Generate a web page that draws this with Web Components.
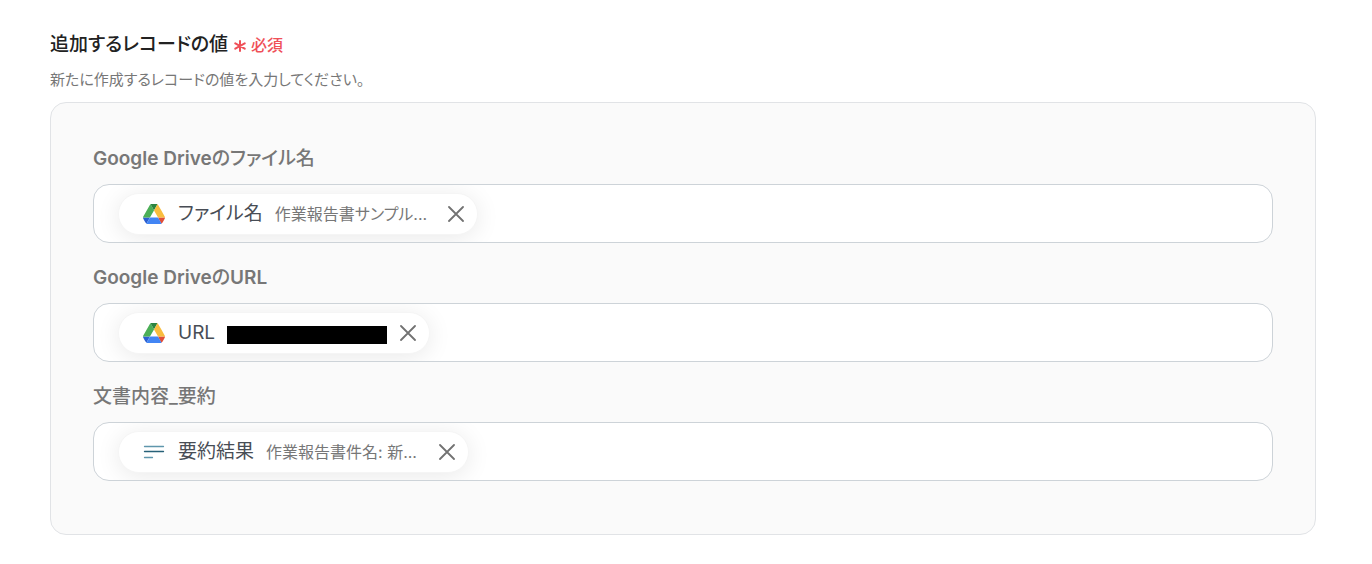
<!DOCTYPE html>
<html lang="ja">
<head>
<meta charset="utf-8">
<meta name="viewport" content="width=device-width, initial-scale=1">
<title>追加するレコードの値</title>
<style>
body {
  margin: 0;
  background: #fff;
  color: #222;
  font-family: Inter, "Noto Sans CJK JP", sans-serif;
  font-feature-settings: "palt";
}
b { font-weight: 600; }
</style>
</head>
<body>
<record-form>
  <span slot="title">追加するレコードの値</span>
  <span slot="help">新たに作成するレコードの値を入力してください。</span>
  <token-field>
    <span slot="label"><b>Google Drive</b>のファイル名</span>
    <value-token><drive-icon slot="icon"></drive-icon><span slot="name">ファイル名</span>作業報告書サンプル...</value-token>
  </token-field>
  <token-field>
    <span slot="label"><b>Google Drive</b>の<b>URL</b></span>
    <value-token><drive-icon slot="icon"></drive-icon><span slot="name">URL</span><redacted-value></redacted-value></value-token>
  </token-field>
  <token-field>
    <span slot="label">文書内容_要約</span>
    <value-token><lines-icon slot="icon"></lines-icon><span slot="name">要約結果</span>作業報告書件名: 新...</value-token>
  </token-field>
</record-form>
<script>
const define = (name, html) => customElements.define(name, class extends HTMLElement {
  constructor() {
    super();
    this.attachShadow({ mode: 'open' }).innerHTML = html;
  }
});

define('drive-icon', `
  <style>:host { display: block; width: 22px; height: 20px; } svg { display: block; width: 100%; height: 100%; }</style>
  <svg viewBox="0 0 87.3 78" preserveAspectRatio="none" aria-hidden="true">
    <path fill="#2b5fd0" d="m6.6 66.85 3.85 6.65c.8 1.4 1.95 2.5 3.3 3.3l13.75-23.8h-27.5c0 1.55.4 3.1 1.2 4.5z"/>
    <path fill="#4caf57" d="m43.65 25-13.75-23.8c-1.35.8-2.5 1.9-3.3 3.3l-25.4 44a9.06 9.06 0 0 0 -1.2 4.5h27.5z"/>
    <path fill="#e04e38" d="m73.55 76.8c1.35-.8 2.5-1.9 3.3-3.3l1.6-2.75 7.65-13.25c.8-1.4 1.2-2.95 1.2-4.5h-27.5l5.85 11.5z"/>
    <path fill="#2c8440" d="m43.65 25 13.75-23.8c-1.35-.8-2.9-1.2-4.5-1.2h-18.5c-1.6 0-3.15.45-4.5 1.2z"/>
    <path fill="#4285f4" d="m59.8 53h-32.3l-13.75 23.8c1.35.8 2.9 1.2 4.5 1.2h50.8c1.6 0 3.15-.45 4.5-1.2z"/>
    <path fill="#f9bd3e" d="m73.4 26.5-12.7-22c-.8-1.4-1.95-2.5-3.3-3.3l-13.75 23.8 16.15 28h27.45c0-1.55-.4-3.1-1.2-4.5z"/>
  </svg>`);

define('lines-icon', `
  <style>:host { display: block; width: 22px; height: 20px; } svg { display: block; }</style>
  <svg width="22" height="20" viewBox="0 0 22 20" fill="none" stroke-linecap="round" aria-hidden="true">
    <path d="M1.500 4.500H20.500M1.500 15.500H9.500" stroke="#5f96ac" stroke-width="1.300"/>
    <path d="M1.500 9.500H20.500" stroke="#276178" stroke-width="1.300"/>
  </svg>`);

define('redacted-value', `
  <style>:host { display: block; height: 18px; margin-top: 5px; background: #000; }</style>`);

define('value-token', `
  <style>
    :host {
      box-sizing: border-box;
      display: flex;
      flex: none;
      align-items: center;
      gap: 12px;
      height: 42px;
      padding: 0 13px 0 24px;
      border: 1px solid #f5f5f5;
      border-radius: 21px;
      background: #fff;
      box-shadow: 0 3px 24px rgba(0, 0, 0, .09);
      color: #777;
      font-size: 16px;
      line-height: 24px;
      white-space: nowrap;
    }
    .name { margin-left: 1px; color: #484d55; font-size: 19px; }
    .value { width: 160px; }
    button { display: block; flex: none; margin: 0 0 0 1px; padding: 0; border: 0; background: none; }
    svg { display: block; }
  </style>
  <slot name="icon"></slot>
  <span class="name"><slot name="name"></slot></span>
  <span class="value"><slot></slot></span>
  <button type="button" aria-label="削除">
    <svg width="16" height="16" viewBox="0 0 16 16" fill="none" stroke="#727272" stroke-width="1.800" stroke-linecap="round" aria-hidden="true"><path d="M1 1 15 15M15 1 1 15"/></svg>
  </button>`);

define('token-field', `
  <style>
    :host { display: block; }
    label { display: block; margin-bottom: 11px; color: #777; font-size: 19px; font-weight: 500; line-height: 28px; }
    .box {
      box-sizing: border-box;
      display: flex;
      align-items: center;
      height: 59px;
      padding: 0 24px;
      overflow: hidden;
      border: 1px solid #cdd3d8;
      border-radius: 16px;
      background: #fff;
    }
    input { flex: 1; min-width: 0; height: 40px; margin-left: 8px; padding: 0; border: 0; outline: 0; background: none; color: #484d55; font: inherit; }
  </style>
  <label for="value"><slot name="label"></slot></label>
  <div class="box"><slot></slot><input id="value" type="text"></div>`);

define('record-form', `
  <style>
    :host { display: block; padding: 31px 56px 28px 50px; }
    header { display: flex; align-items: center; gap: 6px; }
    h1 { margin: 0; color: #222; font-size: 19px; font-weight: 500; line-height: 28px; }
    .required { display: flex; align-items: center; gap: 5px; color: #ef5058; font-size: 16px; font-weight: 500; line-height: 28px; }
    p { margin: 9px 0 10px; color: #777; font-size: 15px; line-height: 24px; }
    section {
      display: flex;
      flex-direction: column;
      gap: 21px;
      padding: 42px 42px 53px;
      border: 1px solid #e1e3e6;
      border-radius: 16px;
      background: #fafafa;
    }
  </style>
  <header>
    <h1><slot name="title"></slot></h1>
    <span class="required">
      <svg width="12" height="14" viewBox="0 -1 12 14" fill="none" stroke="currentColor" stroke-width="2" stroke-linecap="round" aria-hidden="true"><path d="M6 2V12M1.300 4.300 10.700 9.700M10.700 4.300 1.300 9.700"/></svg>
      必須
    </span>
  </header>
  <p><slot name="help"></slot></p>
  <section><slot></slot></section>`);
</script>
</body>
</html>
